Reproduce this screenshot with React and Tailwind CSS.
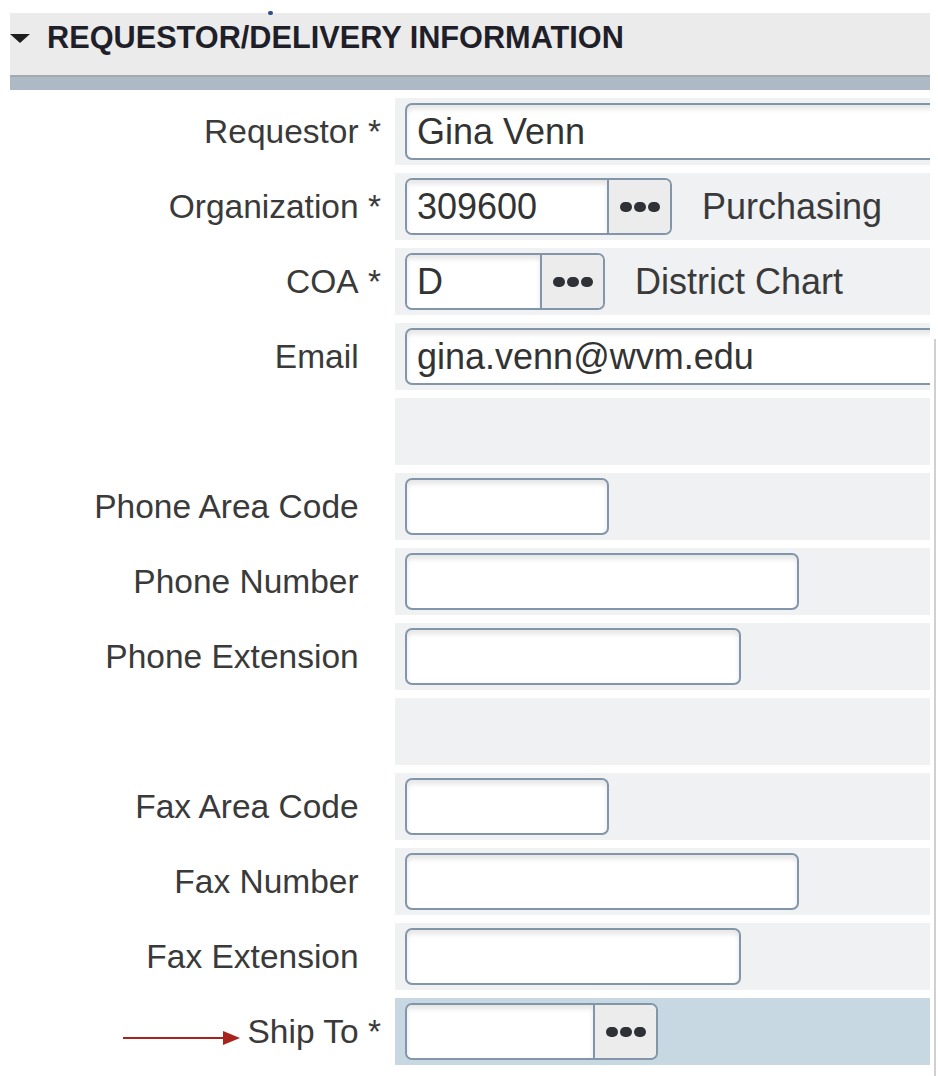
import React from 'react'

// Ellipsis lookup button used by Organization / COA / Ship To
function Dots() {
  return (
    <div className="flex items-center gap-[2px]">
      <span className="w-[12px] h-[10px] rounded-full bg-[#2f3136]" />
      <span className="w-[12px] h-[10px] rounded-full bg-[#2f3136]" />
      <span className="w-[12px] h-[10px] rounded-full bg-[#2f3136]" />
    </div>
  )
}

function TextBox({ value, width }) {
  return (
    <div
      className={`${width} h-[57px] shrink-0 flex items-center pl-[10px] bg-white border-2 border-[#8396a9] rounded-[7px] shadow-[inset_0_4px_5px_rgba(0,0,0,0.10)] text-[36px] text-[#333]`}
    >
      {value}
    </div>
  )
}

function LookupBox({ value, inputWidth }) {
  return (
    <div className="flex h-[57px] shrink-0 border-2 border-[#8396a9] rounded-[7px] overflow-hidden">
      <div className={`${inputWidth} flex items-center pl-[10px] bg-white shadow-[inset_0_4px_5px_rgba(0,0,0,0.10)] text-[36px] text-[#333]`}>
        {value}
      </div>
      <div className="w-[63px] flex items-center justify-center bg-[#ececec] border-l-2 border-[#8396a9]">
        <Dots />
      </div>
    </div>
  )
}

function Arrow() {
  return (
    <svg width="120" height="18" viewBox="0 0 120 18" className="mr-[7px] mt-[12px] shrink-0">
      <line x1="2" y1="9" x2="104" y2="9" stroke="#a8231c" strokeWidth="2" />
      <polygon points="102,2 119,9 102,16" fill="#a8231c" />
    </svg>
  )
}

function Row({ label, required, highlight, arrow, children }) {
  return (
    <div className="flex h-[67px]">
      <div className="w-[381px] flex items-center justify-end text-[#3a3a3a] whitespace-nowrap">
        {arrow && <Arrow />}
        <span>{label}</span>
        <span className={required ? '' : 'invisible'}>&nbsp;*</span>
      </div>
      <div
        className={`ml-[14px] w-[535px] overflow-hidden flex items-center pl-[10px] ${highlight ? 'bg-[#c8d8e2]' : 'bg-[#eff1f3]'}`}
      >
        {children}
      </div>
    </div>
  )
}

export default function App() {
  return (
    <div className="relative w-[938px] h-[1076px] bg-white overflow-hidden font-['Liberation_Sans',Arial,sans-serif] text-[33.5px] leading-none">
      {/* stray dot from the section above */}
      <span className="absolute left-[268px] top-[11px] w-[5px] h-[4px] rounded-full bg-[#2d4f8a]" />

      <div className="pt-[13px] flex">
        <div className="w-[930px]">
          {/* Section header */}
          <div className="ml-[10px] h-[62px] pb-[12px] bg-[#ebebeb] flex items-center">
            <svg width="20" height="10" viewBox="0 0 20 10" className="mt-[2px]">
              <polygon points="0,0 20,0 10,9" fill="#1e1e1e" />
            </svg>
            <span className="ml-[17px] text-[30.7px] font-bold text-[#1f1f2a]">
              REQUESTOR/DELIVERY INFORMATION
            </span>
          </div>
          <div className="ml-[10px] h-[15px] bg-[#adbac6] border-t-2 border-[#a4a9ad]" />

          {/* Form rows */}
          <div className="mt-[8px] flex flex-col gap-[8px]">
            <Row label="Requestor" required>
              <TextBox value="Gina Venn" width="w-[600px]" />
            </Row>
            <Row label="Organization" required>
              <LookupBox value="309600" inputWidth="w-[200px]" />
              <span className="ml-[30px] text-[36px] text-[#3a3a3a]">Purchasing</span>
            </Row>
            <Row label="COA" required>
              <LookupBox value="D" inputWidth="w-[133px]" />
              <span className="ml-[30px] text-[36px] text-[#3a3a3a]">District Chart</span>
            </Row>
            <Row label="Email">
              <TextBox value="gina.venn@wvm.edu" width="w-[600px]" />
            </Row>
            <Row label="" />
            <Row label="Phone Area Code">
              <TextBox width="w-[204px]" />
            </Row>
            <Row label="Phone Number">
              <TextBox width="w-[394px]" />
            </Row>
            <Row label="Phone Extension">
              <TextBox width="w-[336px]" />
            </Row>
            <Row label="" />
            <Row label="Fax Area Code">
              <TextBox width="w-[204px]" />
            </Row>
            <Row label="Fax Number">
              <TextBox width="w-[394px]" />
            </Row>
            <Row label="Fax Extension">
              <TextBox width="w-[336px]" />
            </Row>
            <Row label="Ship To" required highlight arrow>
              <LookupBox value="" inputWidth="w-[186px]" />
            </Row>
          </div>
        </div>

        {/* right scroll edge */}
        <div className="ml-[4px] mt-[326px] w-[2px] h-[750px] bg-[#d0d0d0]" />
      </div>
    </div>
  )
}
